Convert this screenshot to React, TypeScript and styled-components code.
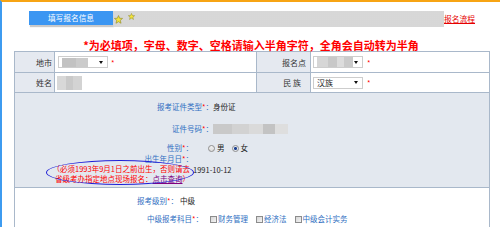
import React from 'react'
import styled, { createGlobalStyle } from 'styled-components'

const GlobalStyle = createGlobalStyle`
  html, body {
    margin: 0;
    padding: 0;
    background: #fff;
    overflow: hidden;
  }
  body {
    font-family: "Noto Sans CJK SC", "Noto Sans", sans-serif;
    font-size: 7.5px;
    color: #222;
  }
`

const Page = styled.div`
  box-sizing: border-box;
  width: 500px;
  height: 227px;
  border-top: 2px solid #f7a414;
  border-left: 2px solid #3d9bf0;
  overflow: hidden;
`

const Header = styled.div`
  display: flex;
  align-items: stretch;
  height: 16px;
  margin: 9px 0 0 27px;
`

const Tab = styled.div`
  width: 84px;
  height: 14px;
  background: #3b96f2;
  color: #fff;
  font-size: 7.7px;
  line-height: 14px;
  text-align: center;
  box-shadow: 1px 2px 1px #c9c9c9;
`

const DotStrip = styled.div`
  display: flex;
  align-items: flex-start;
  width: 331px;
  background-image: radial-gradient(circle, #d6d6d6 0.7px, transparent 0.9px);
  background-size: 2px 2px;
`

const Star = styled.svg<{ $top: number; $left: number }>`
  margin-top: ${p => p.$top}px;
  margin-left: ${p => p.$left}px;
  flex-shrink: 0;
`

const FlowLink = styled.a`
  color: #e60000;
  font-size: 7.75px;
  line-height: 12px;
  margin-top: 2px;
  text-decoration: underline;
`

const Notice = styled.div`
  margin-top: 12px;
  text-align: center;
  color: #f00;
  font-weight: bold;
  font-size: 11px;
  line-height: 12px;
`

const FormTable = styled.table`
  border-collapse: collapse;
  table-layout: fixed;
  margin-left: 12px;
  width: 475px;
`

const Row = styled.tr<{ $h: number }>`
  height: ${p => p.$h}px;
`

const HeadCell = styled.td<{ $pr: number }>`
  border: 1px solid #a9b8ca;
  background: #e5e9f0;
  color: #333;
  font-size: 8px;
  text-align: right;
  padding: 0 ${p => p.$pr}px 0 0;
  white-space: pre;
`

const DataCell = styled.td<{ $pl: number }>`
  border: 1px solid #a9b8ca;
  background: #fff;
  padding: 0 0 0 ${p => p.$pl}px;
  vertical-align: middle;
`

const SectionCell = styled.td<{ $tone: 'gray' | 'white'; $pt: number }>`
  border: 1px solid #a9b8ca;
  background: ${p => (p.$tone === 'gray' ? '#e3e8ef' : '#fff')};
  padding: ${p => p.$pt}px 0 0 0;
  vertical-align: top;
`

const Inline = styled.div`
  display: flex;
  align-items: center;
`

const SelectBox = styled.div`
  box-sizing: border-box;
  display: flex;
  align-items: center;
  width: 50px;
  height: 12px;
  border: 1px solid #cdcdcd;
  background: #fff;
  padding-left: 3px;
  color: #222;
  font-size: 8px;
  line-height: 10px;
`

const SelectText = styled.span`
  flex: 1;
`

// small dropdown caret of the old select box
const Arrow = styled.span`
  width: 0;
  height: 0;
  border-left: 2px solid transparent;
  border-right: 2px solid transparent;
  border-top: 3px solid #111;
  margin-right: 4px;
`

const Blur = styled.span<{ $w: number; $h: number; $stops: string }>`
  display: block;
  width: ${p => p.$w}px;
  height: ${p => p.$h}px;
  background: linear-gradient(90deg, ${p => p.$stops});
`

const Required = styled.span<{ $ml?: number }>`
  color: #f00;
  font-size: 7.5px;
  margin-left: ${p => p.$ml ?? 0}px;
`

const FieldRow = styled.div<{ $mt: number }>`
  display: flex;
  align-items: center;
  height: 12px;
  margin-top: ${p => p.$mt}px;
  line-height: 12px;
`

const FieldLabel = styled.span<{ $end: number }>`
  flex-shrink: 0;
  width: ${p => p.$end}px;
  text-align: right;
  color: #2f6fc2;
  white-space: nowrap;
`

const FieldValue = styled.span<{ $ml?: number }>`
  color: #222;
  margin-left: ${p => p.$ml ?? 0}px;
  white-space: nowrap;
`

const BirthRow = styled.div`
  display: flex;
  align-items: center;
`

const BirthBlock = styled.div`
  position: relative;
  flex-shrink: 0;
  width: 178px;
  text-align: right;
  line-height: 10px;
`

const BirthNote = styled.div`
  color: #f00;
  padding-right: 3px;
  white-space: nowrap;
`

const NoteLink = styled.a`
  color: #800080;
  text-decoration: underline;
`

const Ellipse = styled.span`
  position: absolute;
  left: 31px;
  top: 6px;
  width: 146px;
  height: 23px;
  border: 1.6px solid #1f1fd6;
  border-radius: 50%;
`

const Radio = styled.span<{ $checked?: boolean; $ml: number }>`
  box-sizing: border-box;
  width: 7px;
  height: 7px;
  margin-left: ${p => p.$ml}px;
  margin-right: 2px;
  border: 1px solid #8e8e8e;
  border-radius: 50%;
  background: ${p =>
    p.$checked
      ? 'radial-gradient(circle, #1b3f8f 1.3px, #e4e8ee 1.6px)'
      : 'linear-gradient(#f2f2f2, #dcdcdc)'};
  flex-shrink: 0;
`

const Check = styled.span<{ $ml: number }>`
  box-sizing: border-box;
  width: 7px;
  height: 7px;
  margin-left: ${p => p.$ml}px;
  margin-right: 1px;
  border: 1px solid #8c8c8c;
  background: linear-gradient(135deg, #d6d6d6, #f4f4f4);
  flex-shrink: 0;
`

const CheckLabel = styled.span`
  color: #2f6fc2;
  white-space: nowrap;
`

const StarIcon = ({ size, top, left }: { size: number; top: number; left: number }) => (
  <Star $top={top} $left={left} width={size} height={size} viewBox="0 0 10 10">
    <polygon
      points="5,0.6 6.3,3.6 9.5,3.8 7,5.9 7.8,9.2 5,7.4 2.2,9.2 3,5.9 0.5,3.8 3.7,3.6"
      fill="#f3e43a"
      stroke="#8f8a2a"
      strokeWidth="0.7"
      strokeLinejoin="round"
    />
  </Star>
)

export default function App() {
  return (
    <>
      <GlobalStyle />
      <Page>
        <Header>
          <Tab>填写报名信息</Tab>
          <DotStrip>
            <StarIcon size={9} top={4} left={1} />
            <StarIcon size={7} top={2} left={5} />
          </DotStrip>
          <FlowLink href="#">报名流程</FlowLink>
        </Header>

        <Notice>*为必填项，字母、数字、空格请输入半角字符，全角会自动转为半角</Notice>

        <FormTable>
          <colgroup>
            <col style={{ width: 40 }} />
            <col style={{ width: 202 }} />
            <col style={{ width: 54 }} />
            <col style={{ width: 179 }} />
          </colgroup>
          <tbody>
            <Row $h={21}>
              <HeadCell $pr={2}>地市</HeadCell>
              <DataCell $pl={3}>
                <Inline>
                  <SelectBox>
                    <SelectText>
                      <Blur $w={26} $h={9} $stops="#c2c2c2 0 55%, #cbcbcb 55% 100%" />
                    </SelectText>
                    <Arrow />
                  </SelectBox>
                  <Required $ml={3}>*</Required>
                </Inline>
              </DataCell>
              <HeadCell $pr={4}>报名点</HeadCell>
              <DataCell $pl={2}>
                <Inline>
                  <SelectBox>
                    <SelectText>
                      <Blur
                        $w={36}
                        $h={10}
                        $stops="#d6d6d6 0 30%, #c8c8c8 30% 55%, #dcdcdc 55% 75%, #cacaca 75% 100%"
                      />
                    </SelectText>
                    <Arrow />
                  </SelectBox>
                  <Required $ml={4}>*</Required>
                </Inline>
              </DataCell>
            </Row>
            <Row $h={20}>
              <HeadCell $pr={2}>姓名</HeadCell>
              <DataCell $pl={2}>
                <Blur $w={25} $h={14} $stops="#d8d8d8 0 35%, #c9c9c9 35% 65%, #d3d3d3 65% 100%" />
              </DataCell>
              <HeadCell $pr={9}>民 族</HeadCell>
              <DataCell $pl={2}>
                <Inline>
                  <SelectBox>
                    <SelectText>汉族</SelectText>
                    <Arrow />
                  </SelectBox>
                  <Required $ml={4}>*</Required>
                </Inline>
              </DataCell>
            </Row>
            <Row $h={95}>
              <SectionCell colSpan={4} $tone="gray" $pt={8}>
                <FieldRow $mt={0}>
                  <FieldLabel $end={198}>
                    报考证件类型<Required>*</Required>：
                  </FieldLabel>
                  <FieldValue>身份证</FieldValue>
                </FieldRow>
                <FieldRow $mt={10}>
                  <FieldLabel $end={198}>
                    证件号码<Required>*</Required>：
                  </FieldLabel>
                  <Blur
                    $w={75}
                    $h={10}
                    $stops="#c9c9c9 0 25%, #d2d2d2 25% 48%, #dadada 48% 66%, #c3c3c3 66% 83%, #dedede 83% 100%"
                  />
                </FieldRow>
                <FieldRow $mt={7}>
                  <FieldLabel $end={178}>
                    性别<Required>*</Required>：
                  </FieldLabel>
                  <Radio $ml={15} />
                  <FieldValue>男</FieldValue>
                  <Radio $ml={7} $checked />
                  <FieldValue>女</FieldValue>
                </FieldRow>
                <BirthRow>
                  <BirthBlock>
                    <FieldLabel $end={178}>
                      出生年月日<Required>*</Required>：
                    </FieldLabel>
                    <BirthNote>（必须1993年9月1日之前出生，否则请去</BirthNote>
                    <BirthNote>
                      省级考办指定地点现场报名：<NoteLink href="#">点击查询</NoteLink>）
                    </BirthNote>
                    <Ellipse />
                  </BirthBlock>
                  <FieldValue>1991-10-12</FieldValue>
                </BirthRow>
              </SectionCell>
            </Row>
            <Row $h={50}>
              <SectionCell colSpan={4} $tone="white" $pt={7}>
                <FieldRow $mt={0}>
                  <FieldLabel $end={163}>
                    报考级别<Required>*</Required>：
                  </FieldLabel>
                  <FieldValue $ml={2}>中级</FieldValue>
                </FieldRow>
                <FieldRow $mt={6}>
                  <FieldLabel $end={188}>
                    中级报考科目<Required>*</Required>：
                  </FieldLabel>
                  <Check $ml={7} />
                  <CheckLabel>财务管理</CheckLabel>
                  <Check $ml={8} />
                  <CheckLabel>经济法</CheckLabel>
                  <Check $ml={8} />
                  <CheckLabel>中级会计实务</CheckLabel>
                </FieldRow>
              </SectionCell>
            </Row>
          </tbody>
        </FormTable>
      </Page>
    </>
  )
}
